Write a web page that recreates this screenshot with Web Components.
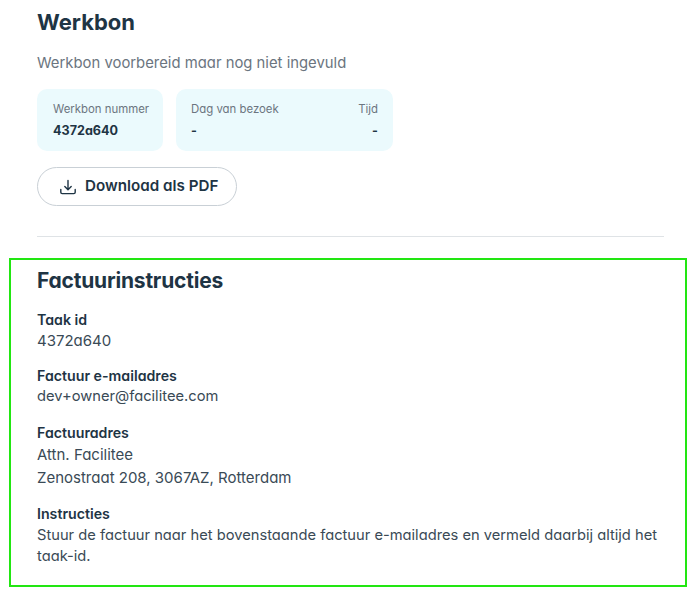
<!DOCTYPE html>
<html lang="nl">
<head>
<meta charset="utf-8">
<title>Werkbon</title>
<style>
    html, body { margin: 0; padding: 0; background: #fff; }
    body { font-family: Inter, Lato, sans-serif; font-feature-settings: "cv11" 1; color: #1e3444; width: 688px; height: 605px; overflow: hidden; }
</style>
</head>
<body>
<work-order>
    <info-card slot="cards" style="width:126px">
        <info-col label="Werkbon nummer" value="4372a640"></info-col>
    </info-card>
    <info-card slot="cards" style="width:217px;padding:11px 15px">
        <info-col label="Dag van bezoek" value="-"></info-col>
        <info-col label="Tijd" value="-" end></info-col>
    </info-card>
</work-order>
<invoice-box>
    <info-block label="Taak id">4372a640</info-block>
    <info-block label="Factuur e-mailadres" style="font-size:14.7px">dev+owner@facilitee.com</info-block>
    <info-block label="Factuuradres"><div style="margin-top:1px">Attn. Facilitee</div><div style="margin:2px 0 1px">Zenostraat 208, 3067AZ, Rotterdam</div></info-block>
    <info-block label="Instructies" style="font-size:14.7px"><div style="margin-top:1px">Stuur de factuur naar het bovenstaande factuur e-mailadres en vermeld daarbij altijd het taak-id.</div></info-block>
</invoice-box>
<script>
customElements.define('info-col', class extends HTMLElement {
    connectedCallback() {
        const shadow = this.attachShadow({mode: 'open'});
        shadow.innerHTML = `
<style>
    :host { display: flex; flex-direction: column; gap: 3px; white-space: nowrap; }
    :host([end]) { align-items: flex-end; }
    #label { font-size: 11.4px; line-height: 18px; color: #6b7580; }
    #value { font-size: 12.6px; line-height: 20px; font-weight: 700; color: #1e3444; }
</style>
<div id="label"></div>
<div id="value"></div>`;
        shadow.getElementById('label').textContent = this.getAttribute('label');
        shadow.getElementById('value').textContent = this.getAttribute('value');
    }
});

customElements.define('info-card', class extends HTMLElement {
    connectedCallback() {
        const shadow = this.attachShadow({mode: 'open'});
        shadow.innerHTML = `
<style>
    :host {
        display: flex;
        justify-content: space-between;
        box-sizing: border-box;
        height: 62px;
        padding: 11px 16px;
        background: #ebfafd;
        border-radius: 10px;
    }
</style>
<slot></slot>`;
    }
});

customElements.define('download-button', class extends HTMLElement {
    connectedCallback() {
        const shadow = this.attachShadow({mode: 'open'});
        shadow.innerHTML = `
<style>
    :host {
        display: inline-flex;
        align-items: center;
        gap: 8px;
        box-sizing: border-box;
        width: 200px;
        height: 39px;
        padding: 0 0 2px 21px;
        border: 1px solid #c9d0d6;
        border-radius: 20px;
        font-size: 15.2px;
        font-weight: 600;
        color: #1e3444;
    }
    svg { flex: none; position: relative; top: 1px; }
</style>
<svg width="18" height="18" viewBox="0 0 18 18" fill="none" stroke="#1e3444" stroke-width="1.4" stroke-linecap="round" stroke-linejoin="round">
    <path d="M9 2.5V11.5M5.8 8.5L9 11.7L12.2 8.5M1.8 11.5V14.2Q1.8 15.6 3.2 15.6H14.8Q16.2 15.6 16.2 14.2V11.5"/>
</svg>
<slot></slot>`;
    }
});

customElements.define('work-order', class extends HTMLElement {
    connectedCallback() {
        const shadow = this.attachShadow({mode: 'open'});
        shadow.innerHTML = `
<style>
    :host { display: block; padding: 7px 24px 0 37px; }
    h2 { margin: 0; font-size: 22px; line-height: 30px; font-weight: 700; color: #1e3444; }
    p { margin: 15px 0 0; font-size: 14.85px; line-height: 22px; color: #6b7580; }
    #cards { display: flex; gap: 13px; margin-top: 15px; }
    #action { margin-top: 16px; }
    hr { margin: 30px 0 0; border: 0; border-top: 1px solid #dfe3e6; }
</style>
<h2>Werkbon</h2>
<p>Werkbon voorbereid maar nog niet ingevuld</p>
<div id="cards"><slot name="cards"></slot></div>
<div id="action"><download-button>Download als PDF</download-button></div>
<hr>`;
    }
});

customElements.define('info-block', class extends HTMLElement {
    connectedCallback() {
        const shadow = this.attachShadow({mode: 'open'});
        shadow.innerHTML = `
<style>
    :host { display: block; font-size: 15px; line-height: 21px; color: #3a4a56; }
    #label { font-weight: 600; color: #1e3444; font-size: 14.2px; }
</style>
<div id="label"></div>
<slot></slot>`;
        shadow.getElementById('label').textContent = this.getAttribute('label');
    }
});

customElements.define('invoice-box', class extends HTMLElement {
    connectedCallback() {
        const shadow = this.attachShadow({mode: 'open'});
        shadow.innerHTML = `
<style>
    :host {
        display: flex;
        flex-direction: column;
        gap: 14.5px;
        box-sizing: border-box;
        width: 678px;
        height: 329px;
        margin: 21px 0 0 9px;
        padding: 6px 20px 0 26px;
        border: 2px solid #22e612;
    }
    h2 { margin: 0 0 -2px; font-size: 21px; letter-spacing: -0.2px; line-height: 30px; font-weight: 700; color: #1e3444; }
</style>
<h2>Factuurinstructies</h2>
<slot></slot>`;
    }
});
</script>
</body>
</html>
